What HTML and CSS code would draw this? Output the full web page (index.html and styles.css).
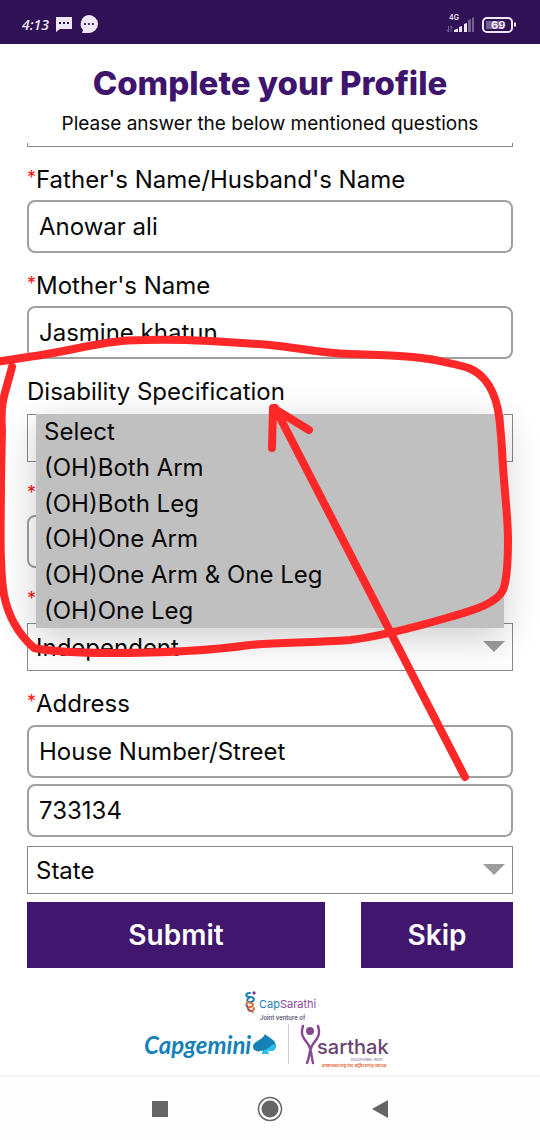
FILE: index.html
```
<!DOCTYPE html>
<html lang="en">

<head>
    <meta charset="UTF-8">
    <meta name="viewport" content="width=device-width, initial-scale=1.0">
    <title>Complete your Profile</title>
    <link rel="stylesheet" href="styles.css">
</head>

<body>
    <div class="screen">
        <!-- Status bar -->
        <div class="status-bar">
            <span class="clock">4:13</span>
            <svg width="18" height="17" viewBox="0 0 18 17">
                <path d="M1 1h16v12H5l-4 3z" fill="#efe6f8" />
                <path d="M4 6h2v2H4zM8 6h2v2H8zM12 6h2v2h-2z" fill="#311155" />
            </svg>
            <svg width="20" height="20" viewBox="0 0 20 20">
                <path d="M10 1a9 9 0 1 1 0 18H3l1-3A9 9 0 0 1 10 1z" fill="#efe6f8" />
                <g fill="#311155"><circle cx="6" cy="10" r="1.1" /><circle cx="10" cy="10" r="1.1" /><circle cx="14" cy="10" r="1.1" /></g>
            </svg>
            <svg class="signal" width="72" height="24" viewBox="0 0 72 24">
                <text x="3" y="8" font-size="7" font-weight="600" fill="#efe6f8">4G</text>
                <path d="M2.500 14v6M1 18L2.500 20M5 20v-6M5 14l1.500 2" fill="none" stroke="#8a76a0" stroke-width=".8" />
                <path d="M8 20v-2l4-1.500V20zM13 15l3-1v6h-3zM18 12l3-1v9h-3z" fill="#efe6f8" />
                <path d="M22 8l3-1v13h-3zM26 6l2-1v15h-2z" fill="#77618f" />
                <rect x="37" y="6" width="29" height="14" rx="4" fill="none" stroke="#efe6f8" stroke-width="2" />
                <rect x="40" y="9" width="16" height="8" fill="#77618f" />
                <path d="M69 10.500v4" stroke="#efe6f8" stroke-width="2" />
                <text x="45" y="17" font-size="11" font-weight="700" fill="#efe6f8">69</text>
            </svg>
        </div>

        <div class="header">
            <h1>Complete your Profile</h1>
            <p>Please answer the below mentioned questions</p>
        </div>

        <form class="profile-form">
            <div class="scrolled-field"></div>

            <div class="form-group">
                <label for="father"><span class="star">*</span>Father's Name/Husband's Name</label>
                <input type="text" id="father" class="input-box" value="Anowar ali">
            </div>

            <div class="form-group">
                <label for="mother"><span class="star">*</span>Mother's Name</label>
                <input type="text" id="mother" class="input-box" value="Jasmine khatun">
            </div>

            <!-- Disability dropdown, shown open -->
            <div class="form-group select-group">
                <label for="disability">Disability Specification</label>
                <div class="select-wrap">
                    <select id="disability" class="select-box">
                        <option>Select</option>
                    </select>
                    <ul class="options">
                        <li>Select</li>
                        <li>(OH)Both Arm</li>
                        <li>(OH)Both Leg</li>
                        <li>(OH)One Arm</li>
                        <li>(OH)One Arm &amp; One Leg</li>
                        <li>(OH)One Leg</li>
                    </ul>
                </div>
            </div>

            <div class="form-group">
                <label for="percent"><span class="star">*</span></label>
                <input type="text" id="percent" class="input-box short">
            </div>

            <div class="form-group select-group">
                <label for="mobility"><span class="star">*</span></label>
                <div class="select-wrap">
                    <select id="mobility" class="select-box">
                        <option>Independent</option>
                    </select>
                </div>
            </div>

            <div class="form-group address">
                <label for="street"><span class="star">*</span>Address</label>
                <input type="text" id="street" class="input-box" value="House Number/Street">
                <input type="text" class="input-box" value="733134" aria-label="Pin code">
                <div class="select-wrap">
                    <select class="select-box" aria-label="State">
                        <option>State</option>
                    </select>
                </div>
            </div>

            <div class="button-container">
                <button type="button" class="my-button">Submit</button>
                <button type="button" class="my-button">Skip</button>
            </div>
        </form>

        <!-- Partner logos -->
        <div class="logos">
            <svg width="254" height="84" viewBox="0 0 254 84">
                <g fill="none" stroke-width="2" stroke-linecap="round">
                    <path d="M107 5c-5 0-5 4 0 4s5 4 1 5-5-3-2-4" stroke="#1b7fb5" />
                    <path d="M105 14c-4 3 0 6 3 5s2-5-1-4M105 20c1 5 6 3 6 0" stroke="#dc6b3a" />
                    <path d="M104 17c-1 7 7 5 6 8" stroke="#5a4a9a" stroke-width="1" />
                </g>
                <circle cx="111" cy="5" r="1.700" fill="#7b3f90" />
                <text x="116" y="20" font-size="11" fill="#1b7fb5">Cap<tspan fill="#8a4a9a">Sarathi</tspan></text>
                <text x="117" y="32" font-size="6" font-weight="500" fill="#43355f">Joint venture of</text>
                <text class="script" x="1" y="66" font-size="24" fill="#1581b8">Capgemini</text>
                <path d="M122 46c3 3 11 6 11 12 0 5-5 6-9 4l2 4h-7l1-4c-4 3-10 1-10-3 0-6 9-6 12-13z" fill="#1581b8" />
                <path d="M133 57c-4-3-6 4-12 5l-2 4h7l-2-4c3 2 9 1 9-5z" fill="#2cbfe8" />
                <path d="M145.500 36v40" stroke="#d2cfd4" />
                <circle cx="167" cy="43" r="4" fill="#86498f" />
                <path d="M160 38c-3 9 1 13 5 18 4 6 3 12 5 19M175 38c3 9-1 13-5 18-4 6-3 12-6 19" fill="none" stroke="#86498f" stroke-width="2.400" stroke-linecap="round" />
                <text x="174" y="66" font-size="20" font-weight="500" fill="#69456f">sarthak</text>
                <text x="208" y="73" font-size="3" fill="#69456f">EDUCATIONAL TRUST</text>
                <text x="179" y="79" font-size="4" font-weight="600" font-style="italic" fill="#e0592c">Empowering the differently abled</text>
            </svg>
        </div>

        <!-- Phone navigation -->
        <div class="nav-bar">
            <button type="button" aria-label="Recent apps">
                <svg width="26" height="26" viewBox="0 0 26 26"><path d="M5 5h16v16H5z" fill="#656565" /></svg>
            </button>
            <button type="button" aria-label="Home">
                <svg width="26" height="26" viewBox="0 0 26 26">
                    <circle cx="13" cy="13" r="11.500" fill="none" stroke="#656565" stroke-width="1.500" />
                    <circle cx="13" cy="13" r="8.500" fill="#656565" />
                </svg>
            </button>
            <button type="button" aria-label="Back">
                <svg width="26" height="26" viewBox="0 0 26 26"><path d="M5 13l16-9v18z" fill="#656565" /></svg>
            </button>
        </div>

        <!-- Red marker drawn over the form -->
        <svg class="marker" viewBox="0 0 540 1140">
            <path d="M-4 362L28 357C80 350 100 340 145 340C190 339 230 342 270 345C300 348 320 353 350 354C390 355 415 356 435 360C462 366 473 366 485 380C499 397 500 420 502 450C504 490 508 515 508 540C508 565 507 580 503 590C497 604 470 611 450 617C425 624 390 635 350 640C310 643 280 642 250 645C200 652 150 653 110 653C75 653 55 652 34 648C17 633 8 615 4 595C-1 565 1 520 1 480L2 430C0 400 5 395 12 367" />
            <path d="M465 777L275 408M272 448L273 408L309 430" />
        </svg>
    </div>
</body>

</html>
```
FILE: styles.css
```
* {
    box-sizing: border-box;
}

body {
    margin: 0;
    background-color: white;
    color: #080808;
    font-family: Inter, "Open Sans", sans-serif;
    font-size: 24px;
}

.screen {
    position: relative;
    min-height: 100vh;
    display: flex;
    flex-direction: column;
    overflow: hidden;
}

.status-bar {
    height: 44px;
    padding: 4px 22px 0;
    display: flex;
    align-items: center;
    gap: 6px;
    background-color: #311155;
    color: #efe6f8;
}

.clock {
    min-width: 26px;
    font-family: "Open Sans", sans-serif;
    font-size: 14px;
    font-style: italic;
    font-weight: 600;
}

.signal {
    margin-left: auto;
}

.header {
    height: 99px;
    padding-top: 20px;
    text-align: center;
}

h1 {
    margin: 0;
    font-size: 33px;
    line-height: 38px;
    font-weight: 800;
    color: #3e146d;
}

.header p {
    margin: 0;
    padding-top: 10px;
    font-size: 19px;
    line-height: 24px;
}

.profile-form {
    padding: 0 5%;
}

.scrolled-field {
    height: 4px;
    border: 1px solid #888;
    border-top: none;
    margin-bottom: 20px;
}

.form-group {
    display: flex;
    flex-direction: column;
    margin-bottom: 20px;
}

label {
    height: 33px;
    line-height: 26px;
}

.select-group label {
    height: 35px;
}

.star {
    color: #ff1010;
    font-size: 18px;
    line-height: 18px;
    vertical-align: 4px;
}

.input-box {
    width: 100%;
    height: 53px;
    padding: 0 10px;
    border: 2px solid #a0a0a0;
    border-radius: 8px;
    background-color: white;
    color: inherit;
    font: inherit;
}

.input-box.short {
    width: 60%;
}

.select-wrap {
    position: relative;
}

.select-wrap::after {
    content: "";
    position: absolute;
    right: 8px;
    top: 18px;
    border: 11px solid transparent;
    border-top-color: #9c9c9c;
    border-bottom: none;
}

.select-box {
    display: block;
    width: 100%;
    height: 48px;
    padding: 0 8px;
    border: 1px solid #888;
    border-radius: 0;
    appearance: none;
    background-color: white;
    color: inherit;
    font: inherit;
}

.options {
    position: absolute;
    z-index: 1;
    top: 0;
    left: 9px;
    right: 9px;
    height: 214px;
    margin: 0;
    padding: 0 8px;
    display: grid;
    align-items: center;
    list-style: none;
    background-color: #c0c0c0;
    box-shadow: 0 10px 36px rgba(0, 0, 0, 0.2);
}

.address {
    gap: 6px;
    margin-bottom: 8px;
}

.address label {
    height: 28px;
}

.address .select-wrap {
    margin-top: 3px;
}

.button-container {
    display: grid;
    grid-template-columns: 298fr 152fr;
    gap: 36px;
}

.my-button {
    height: 66px;
    border: none;
    background-color: #40166e;
    color: white;
    font-family: inherit;
    font-size: 28px;
    font-weight: 600;
    cursor: pointer;
}

.logos {
    height: 107px;
    padding-top: 20px;
    text-align: center;
}

.logos svg {
    display: block;
    margin: 0 auto;
}

.script {
    font-family: Lato, sans-serif;
    font-style: italic;
    font-weight: 700;
}

.nav-bar {
    flex: 1;
    min-height: 64px;
    display: flex;
    justify-content: center;
    align-items: center;
    gap: 84px;
    border-top: 2px solid #f6f6f6;
    background-color: #fefefe;
}

.nav-bar button {
    display: flex;
    padding: 0;
    border: none;
    background: none;
}

.marker {
    position: absolute;
    z-index: 2;
    top: 0;
    left: 0;
    width: 100%;
    pointer-events: none;
    fill: none;
    stroke: #ff2828;
    stroke-width: 8px;
    stroke-linecap: round;
    stroke-linejoin: round;
}
```
